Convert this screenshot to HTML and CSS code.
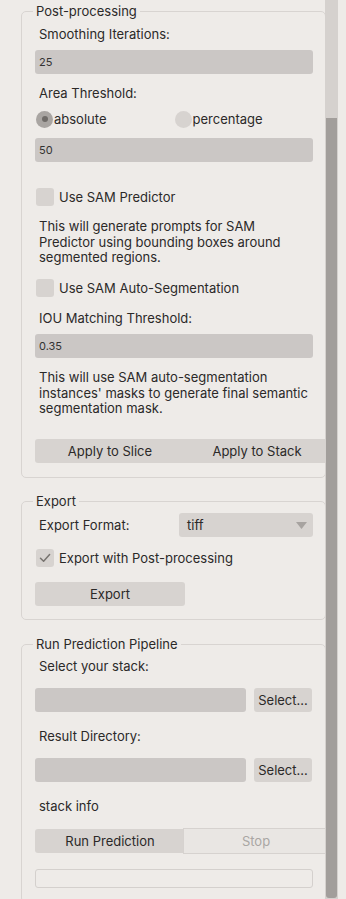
FILE: index.html
```html
<!DOCTYPE html>
<html>
<head>
<meta charset="utf-8">
<link rel="stylesheet" href="styles.css">
</head>
<body>
<div class="window">
  <div class="content">
    <fieldset class="group group-post">
      <legend>Post-processing</legend>
      <div class="body">
        <div class="label">Smoothing Iterations:</div>
        <div class="field m8">25</div>
        <div class="label m11">Area Threshold:</div>
        <div class="radios m9">
          <div class="radio on"><span class="dot"></span>absolute</div>
          <div class="radio"><span class="dot"></span>percentage</div>
        </div>
        <div class="field m10">50</div>
        <div class="check m26"><span class="box"></span>Use SAM Predictor</div>
        <p class="desc m13">This will generate prompts for SAM Predictor using bounding boxes around segmented regions.</p>
        <div class="check m13h"><span class="box"></span>Use SAM Auto-Segmentation</div>
        <div class="label m13">IOU Matching Threshold:</div>
        <div class="field m8">0.35</div>
        <p class="desc m12">This will use SAM auto-segmentation instances' masks to generate final semantic segmentation mask.</p>
        <div class="btnrow m22">
          <div class="btn w150">Apply to Slice</div>
          <div class="btn w144">Apply to Stack</div>
        </div>
      </div>
    </fieldset>

    <fieldset class="group group-export">
      <legend>Export</legend>
      <div class="body">
        <div class="formrow m4">
          <div class="label">Export Format:</div>
          <div class="combo">tiff<svg class="arrow" width="11" height="7" viewBox="0 0 11 7"><path d="M0 0H11L5.5 7Z" fill="#a7a3a0"/></svg></div>
        </div>
        <div class="check m12"><span class="box"><svg width="18" height="18" viewBox="0 0 18 18"><path d="M4.5 9.3L7.6 12.3L13.6 5.6" fill="none" stroke="#77736f" stroke-width="1.5" stroke-linecap="round" stroke-linejoin="round"/></svg></span>Export with Post-processing</div>
        <div class="btn w150 m15">Export</div>
      </div>
    </fieldset>

    <fieldset class="group group-run">
      <legend>Run Prediction Pipeline</legend>
      <div class="body">
        <div class="label m6">Select your stack:</div>
        <div class="pathrow m14">
          <div class="field path"></div>
          <div class="btn select">Select...</div>
        </div>
        <div class="label m16">Result Directory:</div>
        <div class="pathrow m14">
          <div class="field path"></div>
          <div class="btn select">Select...</div>
        </div>
        <div class="label m16">stack info</div>
        <div class="btnrow m15">
          <div class="btn w150">Run Prediction</div>
          <div class="btn stop">Stop</div>
        </div>
        <div class="progress m15"></div>
      </div>
    </fieldset>
  </div>
  <div class="scrollbar"><div class="thumb"></div></div>
</div>
</body>
</html>
```

FILE: styles.css
```css
html, body {
  margin: 0;
  padding: 0;
  background: #eeebe8;
}
body {
  font-family: Inter, "Noto Sans", "Liberation Sans", sans-serif;
  font-size: 13px;
  color: #2b2928;
  width: 346px;
  height: 899px;
  overflow: hidden;
}
.window {
  display: flex;
  height: 899px;
}
.content {
  width: 325px;
  flex: none;
  overflow: hidden;
  display: flex;
  flex-direction: column;
}
.scrollbar {
  width: 13px;
  flex: none;
  background: #d5d1ce;
  padding: 118px 1px 0 1px;
  box-sizing: border-box;
  height: 899px;
}
.thumb {
  height: 780px;
  background: #a29e9b;
  border-radius: 0 0 3px 3px;
}
.group {
  margin: 0 0 0 21px;
  padding: 0;
  width: 305px;
  box-sizing: border-box;
  border: 1px solid #d8d4d1;
  border-radius: 5px;
  min-width: 0;
}
.group-post { margin-top: 3px; }
.group-export { margin-top: 15px; }
.group-run { margin-top: 16px; height: 400px; }
.group legend {
  margin-left: 11px;
  padding: 0 3px;
  line-height: 16px;
  font-size: 13px;
}
.body {
  padding: 7px 12px 14px 13px;
  display: flex;
  flex-direction: column;
}
.group-export .body { padding-top: 0; padding-bottom: 13px; }
.group-run .body { padding-top: 0; }
.label {
  line-height: 16px;
  padding-left: 4px;
}
.field {
  height: 24px;
  background: #cbc7c5;
  border-radius: 3px;
  font-size: 11px;
  line-height: 24px;
  padding-left: 4px;
  box-sizing: border-box;
  color: #333;
}
.radios {
  display: flex;
  height: 18px;
  align-items: center;
  padding-left: 1px;
}
.radio {
  display: flex;
  align-items: center;
  gap: 1px;
  width: 145px;
}
.radio .dot {
  width: 17px;
  height: 17px;
  border-radius: 50%;
  background: #d7d3d0;
  display: flex;
  align-items: center;
  justify-content: center;
}
.radio.on .dot { background: #a9a5a2; }
.radio.on .dot::after {
  content: "";
  width: 6px;
  height: 6px;
  border-radius: 50%;
  background: #6f6b68;
}
.check {
  display: flex;
  align-items: center;
  height: 18px;
  gap: 5px;
  padding-left: 1px;
}
.check .box {
  width: 18px;
  height: 18px;
  border-radius: 3px;
  background: #d7d3d0;
  display: flex;
}
.desc {
  margin-bottom: 0;
  padding-left: 4px;
  line-height: 15.5px;
  margin-right: 4px;
}
.btnrow {
  display: flex;
  margin-right: -20px;
}
.btn {
  height: 24px;
  line-height: 24px;
  text-align: center;
  background: #d7d3d0;
  border-radius: 3px;
  box-sizing: border-box;
}
.w150 { width: 150px; flex: none; }
.w144 { width: 144px; flex: none; }
.btnrow .btn:first-child { border-radius: 3px 0 0 3px; }
.btnrow .btn + .btn { border-radius: 0; }
.stop {
  width: 146px;
  flex: none;
  margin-left: -2px;
  margin-top: -1px;
  height: 26px;
  line-height: 24px;
  background: #e9e6e3;
  border: 1px solid #d6d2cf;
  color: #aaa6a3;
}
.formrow {
  display: flex;
  align-items: center;
  justify-content: space-between;
}
.combo {
  width: 134px;
  height: 24px;
  background: #d7d3d0;
  border-radius: 3px;
  display: flex;
  align-items: center;
  justify-content: space-between;
  padding: 0 6px 0 8px;
  box-sizing: border-box;
}
.pathrow {
  display: flex;
  gap: 8px;
}
.path { width: 211px; flex: none; }
.select { width: 58px; flex: none; }
.progress {
  height: 19px;
  border: 1px solid #d4d0cd;
  border-radius: 3px;
  box-sizing: border-box;
}
.m4 { margin-top: 4px; }
.m6 { margin-top: 6px; }
.m7 { margin-top: 7px; }
.m8 { margin-top: 8px; }
.m9 { margin-top: 9px; }
.m10 { margin-top: 10px; }
.m11 { margin-top: 11px; }
.m12 { margin-top: 12px; }
.m13 { margin-top: 13px; }
.m13h { margin-top: 13.5px; }
.m14 { margin-top: 14px; }
.m15 { margin-top: 15px; }
.m16 { margin-top: 16px; }
.m22 { margin-top: 22.5px; }
.m26 { margin-top: 26px; }
```
